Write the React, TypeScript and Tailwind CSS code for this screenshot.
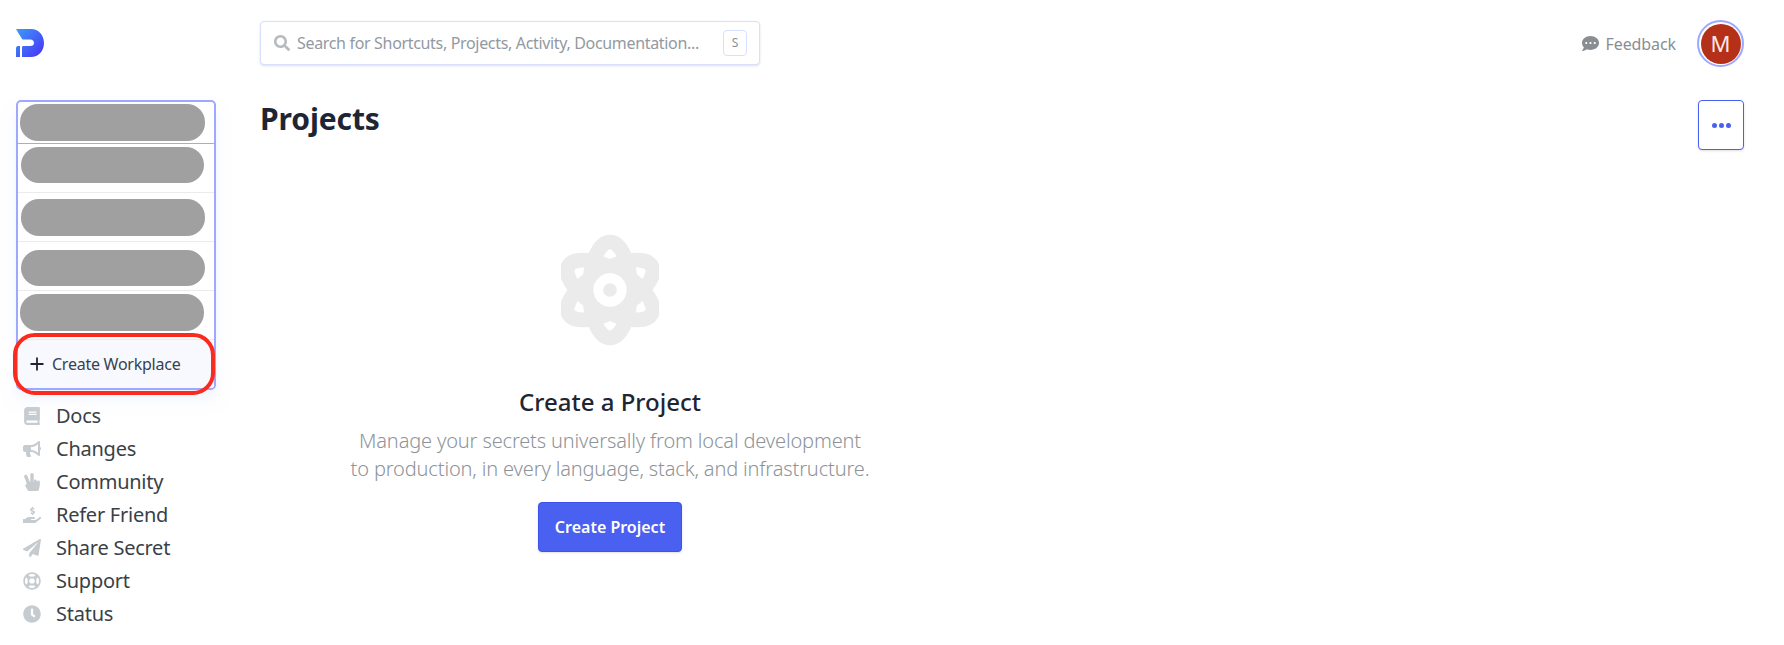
import { FaBook, FaBullhorn, FaClock, FaCommentDots, FaHandHoldingUsd, FaHandPeace, FaPaperPlane, FaRegLifeRing, FaSearch } from "react-icons/fa";

const NAV = [
	{ label: "Docs", icon: FaBook },
	{ label: "Changes", icon: FaBullhorn },
	{ label: "Community", icon: FaHandPeace },
	{ label: "Refer Friend", icon: FaHandHoldingUsd },
	{ label: "Share Secret", icon: FaPaperPlane },
	{ label: "Support", icon: FaRegLifeRing },
	{ label: "Status", icon: FaClock },
];

function Logo() {
	return (
		<svg aria-hidden="true" height="28" viewBox="0 0 28 28" width="28">
			<defs>
				<linearGradient id="logo" x1="0" x2="1" y1="0" y2="1">
					<stop offset="0" stopColor="#3b9bfb" />
					<stop offset="1" stopColor="#4a2ff5" />
				</linearGradient>
			</defs>
			<path
				d="M0 0H15C22.5 0 28 6 28 14C28 22 22.5 28 15 28H6V18.5C6 17.5 6.5 17 7.5 17H14.5C16.5 17 18 15.8 18 14C18 12.2 16.5 10.5 14.5 10.5H6.5C4 7 2 3.5 0 0ZM0 19.5C0 18 .8 17 2 17H4V28H0Z"
				fill="url(#logo)"
			/>
		</svg>
	);
}

function Atom() {
	return (
		<svg aria-hidden="true" height="112" viewBox="-50 -57 100 114" width="98">
			<g fill="none" stroke="#ebebeb" strokeWidth="15">
				<ellipse cx="0" cy="0" rx="21" ry="49" />
				<ellipse cx="0" cy="0" rx="21" ry="49" transform="rotate(60)" />
				<ellipse cx="0" cy="0" rx="21" ry="49" transform="rotate(-60)" />
			</g>
			<circle cx="0" cy="0" fill="#ebebeb" r="25" />
			<circle cx="0" cy="0" fill="#fff" r="17" />
			<circle cx="0" cy="0" fill="#ebebeb" r="7" />
		</svg>
	);
}

function Sidebar() {
	return (
		<aside className="flex w-[260px] shrink-0 flex-col pl-4">
			<div className="flex h-[100px] items-start pt-[29px]">
				<Logo />
			</div>
			<div className="relative w-[200px]">
				<div className="flex h-[290px] flex-col overflow-hidden rounded-[5px] border-2 border-[#9da8ff] bg-white shadow-lg shadow-indigo-50">
					<div className="h-[42px] border-b border-[#9da8ff] pt-[2px] pl-[2px]">
						<div className="h-[37px] w-[185px] rounded-[18px] bg-[#a0a0a0]" />
					</div>
					<div className="h-[49px] border-b border-[#ebebeb] pt-[3px] pl-[3px]">
						<div className="h-[36px] w-[183px] rounded-[18px] bg-[#a0a0a0]" />
					</div>
					<div className="h-[49px] border-b border-[#ebebeb] pt-[6px] pl-[3px]">
						<div className="h-[37px] w-[184px] rounded-[18px] bg-[#a0a0a0]" />
					</div>
					<div className="h-[49px] border-b border-[#ebebeb] pt-[8px] pl-[3px]">
						<div className="h-[36px] w-[184px] rounded-[18px] bg-[#a0a0a0]" />
					</div>
					<div className="h-[49px] border-b border-[#ebebeb] pt-[3px] pl-[2px]">
						<div className="h-[37px] w-[184px] rounded-[18px] bg-[#a0a0a0]" />
					</div>
					<div className="flex flex-1 items-center gap-[8px] bg-[#f8f9ff] pl-[12px] text-[16px] tracking-[-0.25px] text-[#374151]">
						<svg aria-hidden="true" fill="none" height="14" stroke="#1f2430" strokeWidth="1.8" viewBox="0 0 14 14" width="14">
							<path d="M7 .5V13.5M.5 7H13.5" />
						</svg>
						Create Workplace
					</div>
				</div>
				<div className="absolute top-[233px] left-[-3px] h-[62px] w-[202px] rounded-[22px] border-4 border-[#fb2a1e]" />
			</div>
			<nav className="mt-[9px] flex flex-col">
				{NAV.map(({ label, icon: Icon }) => (
					<div className="flex h-[33px] items-center text-[20px] tracking-[-0.25px] text-[#3b3f46]" key={label}>
						<span className="flex w-[40px] justify-start pl-[7px] text-[18px] text-[#c6cbd0]">
							<Icon />
						</span>
						{label}
					</div>
				))}
			</nav>
		</aside>
	);
}

export default function App() {
	return (
		<div className="flex h-[645px] w-[1784px] overflow-hidden bg-white font-['Noto_Sans',sans-serif]">
			<Sidebar />
			<main className="flex min-w-0 flex-1 flex-col pr-10">
				<header className="flex h-[100px] items-start justify-between pt-[20px]">
					<div className="mt-[1px] flex h-[44px] w-[500px] items-center rounded-[4px] border border-[#d9e0ff] bg-white pr-[12px] pl-[13px] shadow-sm">
						<FaSearch className="text-[16px] text-[#b5babf]" />
						<span className="ml-[7px] flex-1 truncate text-[16px] tracking-[-0.33px] text-[#9299a1]">Search for Shortcuts, Projects, Activity, Documentation...</span>
						<span className="flex h-[26px] w-[24px] items-center justify-center rounded-[4px] border border-[#d9e0ff] text-[12px] text-[#8b9198]">S</span>
					</div>
					<div className="flex items-center">
						<FaCommentDots className="text-[17px] text-[#888e92]" />
						<span className="mr-[21px] ml-[7px] text-[16px] tracking-[-0.1px] text-[#888e92]">Feedback</span>
						<div className="flex size-[47px] items-center justify-center rounded-full border-2 border-[#9da8ff] bg-white">
							<div className="flex size-[40px] items-center justify-center rounded-full bg-[#b53018] text-[22px] text-[#fbe9e4]">M</div>
						</div>
					</div>
				</header>
				<div className="flex items-start justify-between">
					<h1 className="text-[30px] leading-[38px] font-bold tracking-[-0.1px] text-[#1e2533]">Projects</h1>
					<button className="flex h-[50px] w-[46px] items-center justify-center gap-[2px] rounded-[4px] border border-[#4a60f0] bg-white shadow-sm" type="button">
						<span className="size-[5px] rounded-full bg-[#4a60f0]" />
						<span className="size-[5px] rounded-full bg-[#4a60f0]" />
						<span className="size-[5px] rounded-full bg-[#4a60f0]" />
					</button>
				</div>
				<section className="mt-[84px] flex w-[700px] flex-col items-center">
					<Atom />
					<h2 className="mt-[40px] text-[24px] leading-[32px] font-medium text-[#1e2533]">Create a Project</h2>
					<p className="mt-[9px] text-center text-[20px] leading-[28px] font-light tracking-[-0.15px] text-[#8d9499]">
						Manage your secrets universally from local development
						<br />
						to production, in every language, stack, and infrastructure.
					</p>
					<button className="mt-[19px] h-[50px] w-[144px] rounded-[4px] border border-[#3c52e8] bg-[#4a60f0] text-[16px] font-semibold text-white shadow-sm" type="button">
						Create Project
					</button>
				</section>
			</main>
		</div>
	);
}
